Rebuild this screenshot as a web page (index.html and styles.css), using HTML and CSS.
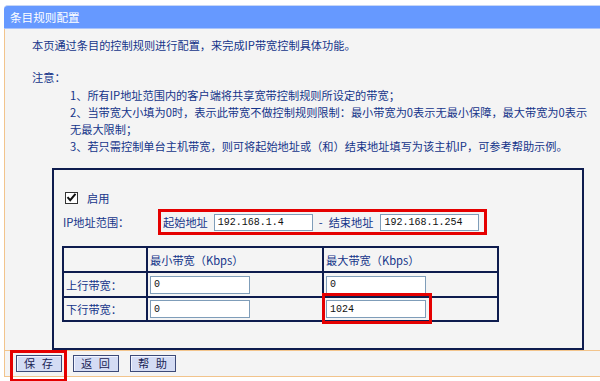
FILE: index.html
```html
<!DOCTYPE html>
<html>
<head>
<meta charset="utf-8">
<title>条目规则配置</title>
<link rel="stylesheet" href="styles.css">
</head>
<body>
<div class="panel">
  <div class="title">条目规则配置</div>
  <div class="content">
    <p class="intro">本页通过条目的控制规则进行配置，来完成IP带宽控制具体功能。</p>
    <p class="note">注意：</p>
    <ul class="tips">
      <li>1、所有IP地址范围内的客户端将共享宽带控制规则所设定的带宽；</li>
      <li>2、当带宽大小填为0时，表示此带宽不做控制规则限制：最小带宽为0表示无最小保障，最大带宽为0表示<br>无最大限制；</li>
      <li>3、若只需控制单台主机带宽，则可将起始地址或（和）结束地址填写为该主机IP，可参考帮助示例。</li>
    </ul>
    <div class="box">
      <div class="enable-row">
        <span class="checkbox"><svg width="11" height="11" viewBox="0 0 11 11"><path d="M1.5 5.2 L4.2 8.2 L9.5 1.8" fill="none" stroke="#111" stroke-width="2"/></svg></span>
        <span>启用</span>
      </div>
      <div class="ip-row">
        <span class="ip-label">IP地址范围：</span>
        <div class="highlight-range">
          <span>起始地址</span>
          <input class="field ip-start" type="text" value="192.168.1.4">
          <span class="dash">-</span>
          <span class="end-label">结束地址</span>
          <input class="field ip-end" type="text" value="192.168.1.254">
        </div>
      </div>
      <table class="bw">
        <tr class="head">
          <td class="c1"></td>
          <td class="c2">最小带宽（Kbps）</td>
          <td class="c3">最大带宽（Kbps）</td>
        </tr>
        <tr class="r1">
          <td class="c1">上行带宽：</td>
          <td class="c2"><input class="field cell-input" type="text" value="0"></td>
          <td class="c3"><input class="field cell-input" type="text" value="0"></td>
        </tr>
        <tr class="r2">
          <td class="c1">下行带宽：</td>
          <td class="c2"><input class="field cell-input" type="text" value="0"></td>
          <td class="c3"><span class="marked"><input class="field cell-input" type="text" value="1024"></span></td>
        </tr>
      </table>
    </div>
  </div>
  <div class="actions">
    <span class="marked-btn"><button class="btn" type="button">保&nbsp;存</button></span>
    <button class="btn" type="button">返&nbsp;回</button>
    <button class="btn" type="button">帮&nbsp;助</button>
  </div>
</div>
</body>
</html>
```
FILE: styles.css
```css
* { box-sizing: border-box; }
html, body { margin: 0; padding: 0; background: #ffffff; }
body {
  width: 600px;
  height: 381px;
  overflow: hidden;
  font-family: "Noto Sans CJK SC", "Liberation Sans", sans-serif;
  font-size: 11.2px;
  color: #15358a;
}
.panel { margin-top: 5px; margin-left: 4px; }
.title {
  height: 24px;
  background: #6699ff;
  border-top: 1px solid #c6d6f6;
  border-bottom: 1px solid #a9c3fb;
  border-top-left-radius: 4px;
  color: #ffffff;
  font-size: 11.6px;
  line-height: 22px;
  padding-left: 6px;
}
.content {
  background: #f4f4f4;
  border-left: 1px solid #f2c48c;
  border-bottom: 1px solid #f2c48c;
  padding: 8px 0 0 27px;
}
.intro, .note { margin: 0; line-height: 17px; }
.note { margin-top: 15px; }
.tips { list-style: none; margin: 1px 0 0 0; padding-left: 38px; line-height: 17px; }
.tips li { margin: 0; }
.box {
  margin-top: 13px;
  margin-left: 20px;
  width: 532px;
  height: 182px;
  border: 2px solid #0e1c4e;
  padding: 19px 0 0 8px;
}
.enable-row { display: flex; align-items: center; height: 17px; padding-left: 3px; }
.checkbox {
  width: 13px; height: 12px;
  border: 1px solid #333;
  background: #fff;
  display: flex; align-items: center; justify-content: center;
  margin-right: 9px;
}
.ip-row { display: flex; align-items: center; margin-top: 3px; height: 26px; }
.ip-label { width: 96px; padding-left: 1px; }
.highlight-range {
  display: flex; align-items: center;
  height: 26px;
  width: 329px;
  border: 3px solid #e50000;
  padding-left: 2px;
}
.field {
  height: 17px;
  border: 1px solid #7f9db9;
  background: #ffffff;
  font-family: "Liberation Mono", monospace;
  font-size: 10px;
  color: #111;
  padding: 0 3px;
  margin: 0;
  outline: none;
}
.ip-start { width: 99px; margin-left: 6px; }
.dash { margin-left: 6px; }
.end-label { margin-left: 6px; }
.ip-end { width: 99px; margin-left: 7px; }
.bw {
  margin-top: 11px;
  border-collapse: separate;
  border-spacing: 0;
  border-top: 2px solid #0e1c4e;
  border-left: 2px solid #0e1c4e;
  width: 437px;
}
.bw td {
  box-sizing: content-box;
  border-right: 2px solid #0e1c4e;
  border-bottom: 2px solid #0e1c4e;
  padding: 0 0 0 2px;
  height: 23px;
  vertical-align: middle;
}
.bw .r2 td { height: 22px; }
.bw .c1 { width: 80px; }
.bw .c2 { width: 172px; }
.bw .c3 { width: 171px; }
.cell-input { width: 100px; height: 18px; display: block; }
.marked { position: relative; display: block; width: 100px; }
.marked::after {
  content: "";
  position: absolute;
  left: -4px; right: -6px; top: -7px; bottom: -6px;
  border: 3px solid #e50000;
}
.actions {
  background: #f4f4f4;
  border-left: 1px solid #f2c48c;
  border-bottom: 1px solid #f2c48c;
  height: 26px;
  padding: 4px 0 0 11px;
  display: flex;
  align-items: flex-start;
  gap: 11px;
}
.btn {
  width: 46px;
  height: 17px;
  margin: 0;
  padding: 0;
  border: 1px solid #3c4a78;
  background: #d4dcf4;
  box-shadow: inset 1px 1px 0 #f2f5ff;
  font-family: "Noto Sans CJK SC", sans-serif;
  font-size: 11.2px;
  line-height: 15px;
  letter-spacing: 1px;
  word-spacing: 2px;
  color: #1a2454;
}
.marked-btn { position: relative; display: block; }
.marked-btn::after {
  content: "";
  position: absolute;
  left: -6px; right: -5px; top: -5px; bottom: -10px;
  border: 3px solid #e50000;
}
```
